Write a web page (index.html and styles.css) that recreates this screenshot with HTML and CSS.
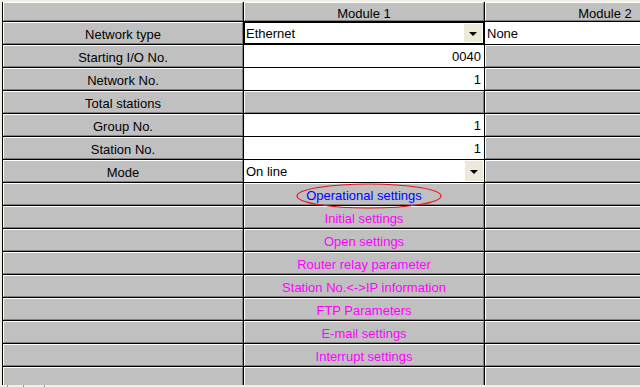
FILE: index.html
```html
<!DOCTYPE html>
<html>
<head>
<meta charset="utf-8">
<link rel="stylesheet" href="styles.css">
</head>
<body>
<div class="frame">
  <div class="grid">
    <div class="cell g hd"></div>
    <div class="cell g hd">Module 1</div>
    <div class="cell g hd">Module 2</div>

    <div class="cell g">Network type</div>
    <div class="cell w sel focus"><span class="txt">Ethernet</span><span class="btn"><i class="tri"></i></span></div>
    <div class="cell w left">None</div>

    <div class="cell g">Starting I/O No.</div>
    <div class="cell w num">0040</div>
    <div class="cell g"></div>

    <div class="cell g">Network No.</div>
    <div class="cell w num">1</div>
    <div class="cell g"></div>

    <div class="cell g">Total stations</div>
    <div class="cell g"></div>
    <div class="cell g"></div>

    <div class="cell g">Group No.</div>
    <div class="cell w num">1</div>
    <div class="cell g"></div>

    <div class="cell g">Station No.</div>
    <div class="cell w num">1</div>
    <div class="cell g"></div>

    <div class="cell g">Mode</div>
    <div class="cell w sel"><span class="txt">On line</span><span class="btn"><i class="tri"></i></span></div>
    <div class="cell g"></div>

    <div class="cell g"></div>
    <div class="cell g blue">Operational settings</div>
    <div class="cell g"></div>

    <div class="cell g"></div>
    <div class="cell g mag">Initial settings</div>
    <div class="cell g"></div>

    <div class="cell g"></div>
    <div class="cell g mag">Open settings</div>
    <div class="cell g"></div>

    <div class="cell g"></div>
    <div class="cell g mag">Router relay parameter</div>
    <div class="cell g"></div>

    <div class="cell g"></div>
    <div class="cell g mag">Station No.&lt;-&gt;IP information</div>
    <div class="cell g"></div>

    <div class="cell g"></div>
    <div class="cell g mag">FTP Parameters</div>
    <div class="cell g"></div>

    <div class="cell g"></div>
    <div class="cell g mag">E-mail settings</div>
    <div class="cell g"></div>

    <div class="cell g"></div>
    <div class="cell g mag">Interrupt settings</div>
    <div class="cell g"></div>

    <div class="cell g"></div>
    <div class="cell g"></div>
    <div class="cell g"></div>
  </div>
</div>
<div class="tabs"><span class="tk t1"></span><span class="tk t2"></span><span class="tk t3"></span></div>
<svg class="mark" width="150" height="30" viewBox="0 0 150 30">
  <ellipse cx="73" cy="14" rx="72" ry="12" fill="none" stroke="#e8101a" stroke-width="1.2"/>
</svg>
</body>
</html>
```
FILE: styles.css
```css
html, body {
  margin: 0;
  padding: 0;
}
body {
  width: 640px;
  height: 387px;
  overflow: hidden;
  background: #f1efe4;
  position: relative;
  font-family: "Liberation Sans", Arial, sans-serif;
  font-size: 13px;
  color: #000;
}
.frame {
  margin: 2px 0 0 2px;
  width: 638px;
  height: 383px;
  overflow: hidden;
}
.grid {
  display: grid;
  grid-template-columns: 240px 240px 240px;
  grid-template-rows: 19px repeat(16, 22px);
  gap: 1px;
  background: #000;
  border-left: 1px solid #000;
  border-bottom: 1px solid #000;
  width: 723px;
}
.cell {
  box-sizing: border-box;
  display: flex;
  align-items: center;
  justify-content: center;
  white-space: nowrap;
  overflow: hidden;
  line-height: 15px;
  padding-top: 1px;
}
.g {
  background: #c0c0c0;
  border-top: 1px solid #fff;
  border-left: 1px solid #fff;
  border-bottom: 1px solid #808080;
  border-right: 1px solid #808080;
  padding-top: 2px;
}
.hd {
  padding-top: 3px;
}
.w {
  background: #fff;
}
.num {
  justify-content: flex-end;
  padding-right: 3px;
}
.left {
  justify-content: flex-start;
  padding-left: 2px;
}
.sel {
  justify-content: space-between;
  padding-left: 2px;
  padding-top: 0;
}
.focus {
  border: 1px solid #000;
  padding-left: 1px;
}
.txt {
  flex: 1;
  padding-top: 1px;
}
.btn {
  width: 18px;
  align-self: stretch;
  margin: 1px 1px 1px 0;
  background: #ece9d8;
  display: flex;
  align-items: center;
  justify-content: center;
}
.tri {
  width: 0;
  height: 0;
  border-left: 4px solid transparent;
  border-right: 4px solid transparent;
  border-top: 4px solid #000;
  margin-top: 1px;
}
.blue { color: #0000ff; }
.mag { color: #ff00ff; }
.tabs {
  height: 2px;
  display: flex;
}
.tk {
  display: block;
  height: 2px;
  border-right: 1px solid #9a9a9a;
}
.t1 { width: 7px; }
.t2 { width: 15px; }
.t3 { width: 20px; }
.mark {
  position: absolute;
  left: 296px;
  top: 182px;
}
```
